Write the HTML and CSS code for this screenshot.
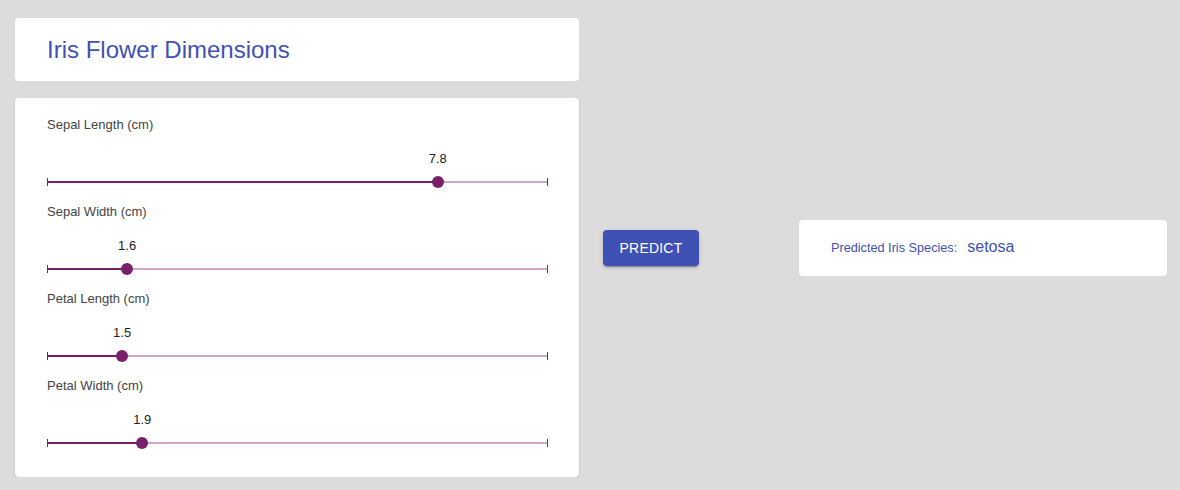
FILE: index.html
```html
<!DOCTYPE html>
<html>
<head>
<meta charset="utf-8">
<link rel="stylesheet" href="styles.css">
</head>
<body>
<div class="page">
  <div class="left">
    <div class="card title-card">
      <h1 class="title">Iris Flower Dimensions</h1>
    </div>
    <div class="card sliders">
      <div class="row">
        <div class="label">Sepal Length (cm)</div>
        <div class="slider">
          <div class="value" style="left: 78%">7.8</div>
          <div class="track"></div>
          <div class="active" style="width: 78%"></div>
          <div class="tick tick-l"></div>
          <div class="tick tick-r"></div>
          <div class="thumb" style="left: 78%"></div>
        </div>
      </div>
      <div class="row">
        <div class="label">Sepal Width (cm)</div>
        <div class="slider">
          <div class="value" style="left: 16%">1.6</div>
          <div class="track"></div>
          <div class="active" style="width: 16%"></div>
          <div class="tick tick-l"></div>
          <div class="tick tick-r"></div>
          <div class="thumb" style="left: 16%"></div>
        </div>
      </div>
      <div class="row">
        <div class="label">Petal Length (cm)</div>
        <div class="slider">
          <div class="value" style="left: 15%">1.5</div>
          <div class="track"></div>
          <div class="active" style="width: 15%"></div>
          <div class="tick tick-l"></div>
          <div class="tick tick-r"></div>
          <div class="thumb" style="left: 15%"></div>
        </div>
      </div>
      <div class="row">
        <div class="label">Petal Width (cm)</div>
        <div class="slider">
          <div class="value" style="left: 19%">1.9</div>
          <div class="track"></div>
          <div class="active" style="width: 19%"></div>
          <div class="tick tick-l"></div>
          <div class="tick tick-r"></div>
          <div class="thumb" style="left: 19%"></div>
        </div>
      </div>
    </div>
  </div>
  <div class="mid">
    <button class="predict">PREDICT</button>
  </div>
  <div class="card result">
    <span class="result-label">Predicted Iris Species:</span>
    <span class="result-value">setosa</span>
  </div>
</div>
</body>
</html>
```

FILE: styles.css
```css
html, body {
  margin: 0;
  padding: 0;
  background: #dcdcdc;
  font-family: "Liberation Sans", Arial, sans-serif;
}

.page {
  display: flex;
  align-items: center;
  padding: 18px 14px 0 15px;
  height: 459px;
}

.left {
  width: 564px;
  display: flex;
  flex-direction: column;
  gap: 17px;
  flex: none;
}

.card {
  background: #fff;
  border-radius: 4px;
}

.title-card {
  height: 63px;
  display: flex;
  align-items: center;
  padding-left: 32px;
}

.title {
  margin: 0;
  font-size: 24px;
  font-weight: normal;
  color: #3f51b5;
  line-height: 28px;
}

.sliders {
  padding: 19px 31px 19px 32px;
  height: 341px;
  box-shadow: 0 1px 2px rgba(0,0,0,0.22);
}

.row {
  margin-bottom: 7px;
}

.row:last-child {
  margin-bottom: 0;
}

.label {
  font-size: 13px;
  line-height: 16px;
  color: #444;
  height: 16px;
}

.slider {
  position: relative;
  height: 64px;
}

.value {
  position: absolute;
  top: 18px;
  transform: translateX(-50%);
  font-size: 13px;
  line-height: 16px;
  color: #222;
}

.track {
  position: absolute;
  left: 0;
  right: 0;
  top: 48px;
  height: 2px;
  background: #cfa6c8;
}

.active {
  position: absolute;
  left: 0;
  top: 48px;
  height: 2px;
  background: #7a1f68;
}

.tick {
  position: absolute;
  top: 45px;
  width: 1px;
  height: 8px;
  background: #7a1f68;
}

.tick-l { left: 0; }
.tick-r { right: 0; }

.thumb {
  position: absolute;
  top: 43px;
  width: 12px;
  height: 12px;
  margin-left: -6px;
  border-radius: 50%;
  background: #78206a;
}

.mid {
  width: 220px;
  flex: none;
  display: flex;
  padding-left: 24px;
  box-sizing: border-box;
}

.predict {
  width: 96px;
  height: 36px;
  border: none;
  border-radius: 4px;
  background: #3f51b5;
  color: #fff;
  font-family: "Liberation Sans", Arial, sans-serif;
  font-size: 14px;
  letter-spacing: 0.2px;
  padding: 0;
  box-shadow: 0 3px 1px -2px rgba(0,0,0,0.2), 0 2px 2px rgba(0,0,0,0.14), 0 1px 5px rgba(0,0,0,0.12);
}

.result {
  width: 368px;
  height: 56px;
  flex: none;
  box-sizing: border-box;
  padding-left: 32px;
  display: flex;
  align-items: center;
}

.result-label {
  font-size: 12.7px;
  color: #3f51b5;
  margin-right: 10px;
}

.result-value {
  font-size: 16px;
  color: #3f51b5;
  position: relative;
  top: -1px;
}
```
